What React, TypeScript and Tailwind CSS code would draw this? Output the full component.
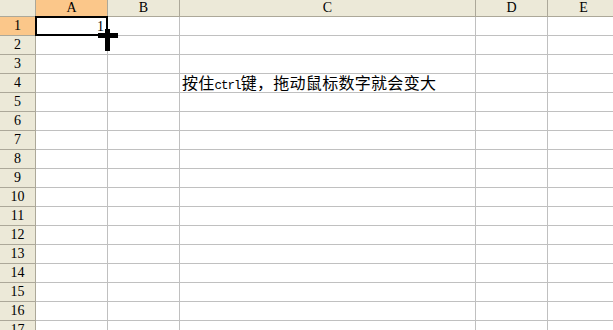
const cols = ["A", "B", "C", "D", "E"];
const rows = Array.from({ length: 17 }, (_, i) => i + 1);

const headFont = { fontFamily: '"Liberation Serif", "DejaVu Serif", serif' };

export default function App() {
  return (
    <div className="relative w-[613px] h-[330px] overflow-hidden bg-white select-none">
      <div className="grid grid-cols-[36px_72px_72px_296px_72px_72px] grid-rows-[17px_repeat(17,19px)] w-[620px]">
        {/* corner */}
        <div className="bg-[#ECE9D8] border-r border-b border-[#ACA899]" />
        {cols.map((c) => (
          <div
            key={c}
            style={headFont}
            className={`flex items-center justify-center border-r border-b border-[#ACA899] text-[14px] leading-none text-black ${
              c === "A" ? "bg-[#FBC78A]" : "bg-[#ECE9D8]"
            }`}
          >
            {c}
          </div>
        ))}

        {rows.map((r) => (
          <Row key={r} n={r} />
        ))}
      </div>

      {/* active cell border */}
      <div className="absolute left-[35px] top-[16px] w-[73px] h-[20px] border-2 border-black" />

      {/* fill handle cursor */}
      <div className="absolute left-[105px] top-[29px] w-[5px] h-[22px] bg-black" />
      <div className="absolute left-[98px] top-[33px] w-[20px] h-[5px] bg-black" />
    </div>
  );
}

function Row({ n }: { n: number }) {
  return (
    <>
      <div
        style={headFont}
        className={`flex items-center justify-center border-r border-b border-[#ACA899] text-[14px] leading-none text-black ${
          n === 1 ? "bg-[#FBC78A]" : "bg-[#ECE9D8]"
        }`}
      >
        {n}
      </div>
      {cols.map((c) => (
        <div
          key={c}
          className={`flex items-end overflow-visible border-r border-b border-[#C0C0C0] ${
            n === 1 && c === "A" ? "justify-end pr-[3px] pb-[1px]" : "pl-[2px]"
          }`}
        >
          {n === 1 && c === "A" && (
            <span style={headFont} className="text-[14px] leading-none text-black">
              1
            </span>
          )}
          {n === 4 && c === "C" && (
            <span
              className="whitespace-nowrap text-[16px] leading-none text-black tracking-[0.3px]"
              style={{ fontFamily: '"Noto Sans CJK SC", sans-serif' }}
            >
              按住
              <span
                style={{ fontFamily: '"Liberation Mono", monospace' }}
                className="text-[12.5px] tracking-[-1px]"
              >
                ctrl
              </span>
              键，拖动鼠标数字就会变大
            </span>
          )}
        </div>
      ))}
    </>
  );
}
